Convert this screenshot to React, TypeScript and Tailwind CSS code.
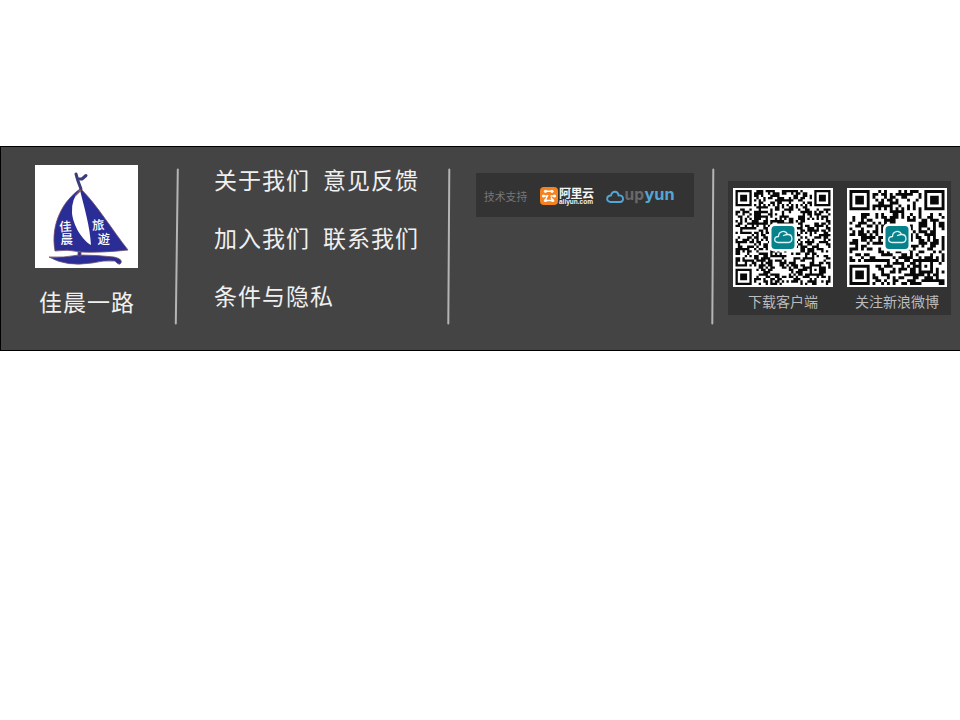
import React from "react";

const FONT = "font-['Noto_Sans_CJK_SC','Noto_Sans',sans-serif]";

function Divider({ lean = 1 }: { lean?: number }) {
  return (
    <svg className="mt-[20px] h-[158px] w-[6px] shrink-0" viewBox="0 0 6 158">
      <line x1={2.8 + lean / 2} y1="2.500" x2={2.8 - lean / 2} y2="156.500" stroke="#b4b4b4" strokeWidth="2" strokeLinecap="round" />
    </svg>
  );
}

function SailLogo() {
  return (
    <svg className="block h-[103px] w-[103px] bg-white" viewBox="0 0 103 103">
      <g fill="#2b2d97" stroke="#705069" strokeWidth=".8">
        <path d="M45 24C29 35 15 58 20 86Q32 84 46 87Q66 88 93 85C78 66 62 40 46 24Z" />
        <path d="M14 92Q28 93 44 90Q62 90 79 92Q88 94 86 98Q84 101 80 96Q69 95 57 98Q31 102 14 92Z" />
        <path d="M43 87H46V91H43Z" />
      </g>
      <path d="M45 25C49 42 55 61 56 80C47 75 38 60 37 48Q36 34 45 25Z" fill="#fff" />
      <path d="M41 9L43 16L46 24M43 14L47 14L51 10.500" fill="none" stroke="#3b3b7d" strokeWidth="3" strokeLinecap="round" strokeLinejoin="round" />
      <path d="M46 25L40 31" stroke="#80575f" strokeWidth="1.500" />
      <g fill="#fff" fontSize="12.500" fontWeight="500" fontFamily="Noto Sans CJK SC, sans-serif">
        <text x="24" y="66" transform="rotate(-4 30 60)">佳</text>
        <text x="25.500" y="79">晨</text>
        <text x="57" y="64.500" transform="rotate(-4 63 60)">旅</text>
        <text x="62.500" y="78.500">遊</text>
      </g>
    </svg>
  );
}

// Dark modules for a code with n modules per side.
function modules(n: number, seed: number): string {
  let state = seed;
  let d = "";
  const corner = (x: number, y: number) => {
    if (x < -1 || y < -1 || x > 7 || y > 7) return null;
    if (x < 0 || y < 0 || x > 6 || y > 6) return false;
    return x === 0 || y === 0 || x === 6 || y === 6 || (x > 1 && x < 5 && y > 1 && y < 5);
  };
  for (let y = 0; y < n; y++) {
    for (let x = 0; x < n; x++) {
      state = (Math.imul(state, 1664525) + 1013904223) >>> 0;
      let dark = ((state >>> 16) & 1023) < 520;
      const f = corner(x, y) ?? corner(x - n + 7, y) ?? corner(x, y - n + 7);
      const ax = Math.abs(x - n + 7);
      const ay = Math.abs(y - n + 7);
      if (f !== null) dark = f;
      else if (x === 6) dark = y % 2 === 0;
      else if (y === 6) dark = x % 2 === 0;
      else if (ax <= 2 && ay <= 2) dark = Math.max(ax, ay) !== 1;
      if (dark) d += `M${x} ${y}h1v1h-1z`;
    }
  }
  return d;
}

function QrCode({ n, seed }: { n: number; seed: number }) {
  return (
    <svg className="block h-[99px] w-[100px] bg-white" viewBox="0 0 100 99">
      <path d={modules(n, seed)} fill="#080808" transform={`translate(2.500 2) scale(${95 / n})`} />
      <rect x="36" y="35.500" width="28" height="28" rx="5" fill="#fff" />
      <rect x="38.500" y="38" width="23" height="23" rx="3.500" fill="#07828d" />
      <path d="M45 54.500C40.500 54.500 40.500 48.500 45.500 48.500C45.500 43 52.500 41.500 54.500 46.500C60 46 60.500 54.500 55.500 54.500ZM50.500 47.500Q53 46.500 54.500 46.500" fill="none" stroke="#d9f4f3" strokeWidth="1.300" strokeLinecap="round" strokeLinejoin="round" />
    </svg>
  );
}

function Aliyun() {
  return (
    <div className="flex items-center">
      <svg className="block h-[18px] w-[18px]" viewBox="0 0 18 18">
        <rect width="18" height="18" rx="4" fill="#f5821f" />
        <g fill="none" stroke="#fff" strokeWidth="1.500">
          <path d="M5.500 4.300H12M3 9H7M10.500 9H15M8 8L5 13.500H13L11 10.500" />
        </g>
        <g fill="#fff">
          <circle cx="5.500" cy="4.300" r="1.600" /><circle cx="12" cy="4.300" r="1.600" />
          <circle cx="3.500" cy="9" r="1.600" /><circle cx="14.500" cy="9" r="1.600" />
          <circle cx="5.500" cy="13.500" r="1.600" /><circle cx="12.700" cy="13.500" r="1.600" />
        </g>
      </svg>
      <svg className="ml-px block h-[20px] w-[36px] overflow-visible" viewBox="0 0 36 20" fill="#f5f5f5">
        <text x="0" y="12" fontSize="12" fontWeight="700" textLength="35" fontFamily="Noto Sans CJK SC, sans-serif">阿里云</text>
        <text x="0" y="17.500" fontSize="7" fontWeight="700" textLength="34" lengthAdjust="spacingAndGlyphs" fontFamily="Liberation Sans, sans-serif">aliyun.com</text>
      </svg>
    </div>
  );
}

function Upyun() {
  return (
    <svg className="block h-[24px] w-[70px] overflow-visible" viewBox="0 0 70 24">
      <path d="M4.500 18C-.5 17 .5 11.500 5 11.500C6 6.500 12 6.500 12.500 11.500C18 10.500 18.500 18 14 18Z" fill="none" stroke="#55a6d8" strokeWidth="1.900" strokeLinejoin="round" />
      <g fontFamily="Inter, sans-serif" fontSize="16.500" fontWeight="700">
        <text x="18.500" y="16" fill="#696969" textLength="19.500" lengthAdjust="spacingAndGlyphs">up</text>
        <text x="38.500" y="16" fill="#55a6d8" textLength="30" lengthAdjust="spacingAndGlyphs">yun</text>
      </g>
    </svg>
  );
}

const rows = [["关于我们", "意见反馈"], ["加入我们", "联系我们"], ["条件与隐私"]];

export default function App() {
  return (
    <div className={`h-[720px] w-[960px] overflow-hidden bg-white pt-[146px] ${FONT}`}>
      <footer className="flex h-[205px] items-start border-y border-l border-black bg-[#444]">
        <div className="flex w-[173px] shrink-0 flex-col items-center pr-[3px] pt-[18px]">
          <SailLogo />
          <div className="mt-[16px] pl-[2px] text-[23px] leading-[34px] tracking-[1px] text-[#f0f0f0]">佳晨一路</div>
        </div>
        <Divider lean={2} />
        <nav className="flex w-[266px] shrink-0 flex-col gap-[24px] pl-[34px] pt-[15px] text-[23px] leading-[34px] tracking-[1px] text-[#f0f0f0]">
          {rows.map((row) => (
            <div key={row[0]} className="flex gap-[13px]">
              {row.map((label) => <a key={label}>{label}</a>)}
            </div>
          ))}
        </nav>
        <Divider />
        <div className="w-[258px] shrink-0 pl-[24px] pt-[26px]">
          <div className="flex h-[44px] w-[218px] items-center bg-[#333] pl-[8px] pt-[2px]">
            <span className="w-[56px] text-[10.8px] text-[#777]">技术支持</span>
            <Aliyun />
            <span className="ml-[11px]"><Upyun /></span>
          </div>
        </div>
        <Divider />
        <div className="ml-[12px] mt-[34px] flex h-[134px] w-[223px] shrink-0 gap-[14px] bg-[#333] pl-[5px] pt-[7px] text-[14px] leading-[20px] text-[#bcbcbc]">
          <div className="flex w-[100px] flex-col items-center gap-[4px]">
            <QrCode n={41} seed={7213} />
            <span>下载客户端</span>
          </div>
          <div className="flex w-[100px] flex-col items-center gap-[4px]">
            <QrCode n={33} seed={4409} />
            <span>关注新浪微博</span>
          </div>
        </div>
      </footer>
    </div>
  );
}
